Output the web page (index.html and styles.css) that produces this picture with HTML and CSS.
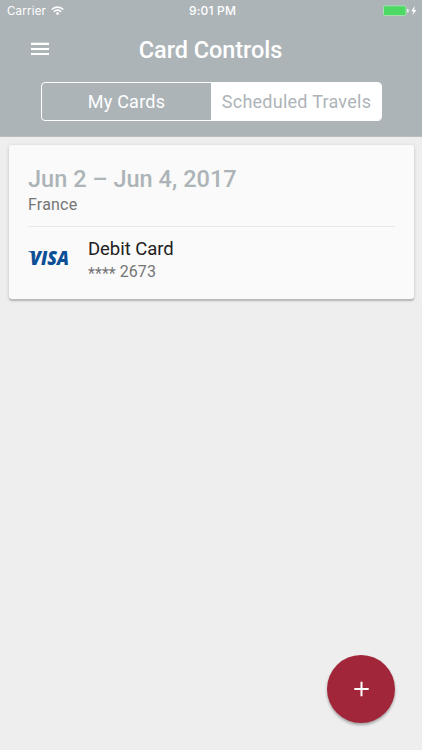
FILE: index.html
```html
<!DOCTYPE html>
<html lang="en">
<head>
<meta charset="utf-8">
<title>Card Controls</title>
<link rel="stylesheet" href="styles.css">
</head>
<body>
<header class="header">
  <div class="status">
    <div class="carrier"><span>Carrier</span>
      <svg class="wifi" width="13" height="10" viewBox="0 0 13 10"><g fill="none" stroke="#fff" stroke-width="1.6"><path d="M.7 3.5a8.2 8.2 0 0 1 11.6 0"/><path d="M2.8 5.7a5.2 5.2 0 0 1 7.4 0"/></g><path fill="#fff" d="M4.6 7.3a2.7 2.7 0 0 1 3.8 0L6.5 9.3z"/></svg>
    </div>
    <time class="clock">9:01 PM</time>
    <div class="power">
      <svg width="34" height="12" viewBox="0 0 34 12"><rect x=".5" y=".8" width="22.5" height="9.7" rx="1.6" fill="#4cd964" stroke="#a5dfb1"/><path d="M24 4h.7q1 0 1 1v1.4q0 1-1 1H24z" fill="#e5f1e9"/><path d="M31.8 1L28.2 6.3h2.2L29.6 10l3.8-5h-2.3z" fill="#fff"/></svg>
    </div>
  </div>
  <div class="titlebar">
    <svg class="menu" width="18" height="14" viewBox="0 0 18 14"><path fill="#fff" d="M0 .8h18v2.1H0zM0 5.9h18V8H0zM0 11h18v2.1H0z"/></svg>
    <h1 class="title">Card Controls</h1>
  </div>
  <nav class="tabs">
    <div class="tab">My Cards</div>
    <div class="tab tab-active">Scheduled Travels</div>
  </nav>
</header>
<main>
  <article class="card">
    <h2 class="dates">Jun 2 – Jun 4, 2017</h2>
    <p class="place">France</p>
    <div class="account">
      <svg class="visa" width="50" height="32" viewBox="0 -4 50 32"><path d="M.2 4.3h5.4l2.5 6C5.5 6.6 3.1 5.2.2 4.8z"/><text x="2" y="17.7" textLength="39" lengthAdjust="spacingAndGlyphs">VISA</text></svg>
      <div>
        <div class="name">Debit Card</div>
        <div class="number"><span class="mask">****</span> 2673</div>
      </div>
    </div>
  </article>
</main>
<button class="add" aria-label="Add travel"><svg width="16" height="16" viewBox="0 0 16 16"><path d="M8.5.8v14.4M1.3 8h14.4" stroke="#fff" stroke-width="2"/></svg></button>
</body>
</html>
```
FILE: styles.css
```css
* { box-sizing: border-box; }
body {
  margin: 0;
  height: 750px;
  overflow: hidden;
  background: #eee;
  font-family: Roboto, "Liberation Sans", sans-serif;
}
h1, h2, p { margin: 0; font-weight: 500; }
svg { display: block; }
.header {
  height: 137px;
  background: #adb4b8;
  color: #fff;
  border-bottom: 1px solid #b7bdc0;
}
.status {
  height: 22px;
  padding: 0 4px 0 7px;
  display: grid;
  grid-template-columns: 1fr auto 1fr;
  align-items: center;
  font: 11.5px/22px Inter, sans-serif;
}
.carrier { display: flex; align-items: center; gap: 5px; letter-spacing: .2px; }
.wifi { margin-top: -1px; }
.clock { font-size: 12px; font-weight: 500; letter-spacing: .2px; }
.power { display: flex; justify-content: flex-end; padding-right: 1px; }
.titlebar {
  height: 60px;
  display: grid;
  grid-template-columns: 49px 1fr 49px;
  align-items: center;
}
.menu { margin: -6px 0 0 31px; }
.title {
  margin: -4px 1px 0 0;
  text-align: center;
  font-size: 23.5px;
  line-height: 30px;
  letter-spacing: -.05px;
}
.tabs {
  width: 341px;
  height: 39px;
  margin-left: 41px;
  display: grid;
  grid-template-columns: 169px 1fr;
  border: 1px solid #fff;
  border-radius: 4px;
  overflow: hidden;
  font-size: 18px;
  line-height: 38px;
  letter-spacing: .25px;
  text-align: center;
}
.tab-active { background: #fff; color: #adb4b8; padding-left: 1px; }
.card {
  width: 405px;
  height: 154px;
  margin: 8px 0 0 9px;
  padding: 20px 19px 0;
  background: #fafafa;
  border-radius: 3px;
  box-shadow: 0 2px 1px #bbb, 0 1px 4px rgba(0, 0, 0, .14);
}
.dates { color: #adb4b8; font-size: 23.5px; line-height: 28px; letter-spacing: .03px; }
.place { color: #757575; font-size: 16px; line-height: 24px; font-weight: 400; letter-spacing: .2px; }
.account {
  margin-top: 9px;
  padding-top: 10px;
  border-top: 1px solid #e8e8e8;
  display: grid;
  grid-template-columns: 60px 1fr;
  align-items: center;
}
.visa { margin-top: -2px; fill: #0b4f96; }
.visa text { font: italic 800 18.5px "Open Sans", sans-serif; }
.name { color: #202020; font-size: 18.5px; line-height: 24px; letter-spacing: -.05px; }
.number { color: #757575; font-size: 16px; line-height: 22px; letter-spacing: .05px; }
.mask { position: relative; top: 2px; }
.add {
  position: absolute;
  left: 327px;
  top: 655px;
  width: 68px;
  height: 68px;
  padding: 0;
  border: 0;
  border-radius: 50%;
  background: #a22639;
  display: grid;
  place-items: center;
  box-shadow: 0 2px 3px rgba(0, 0, 0, .32);
}
```
